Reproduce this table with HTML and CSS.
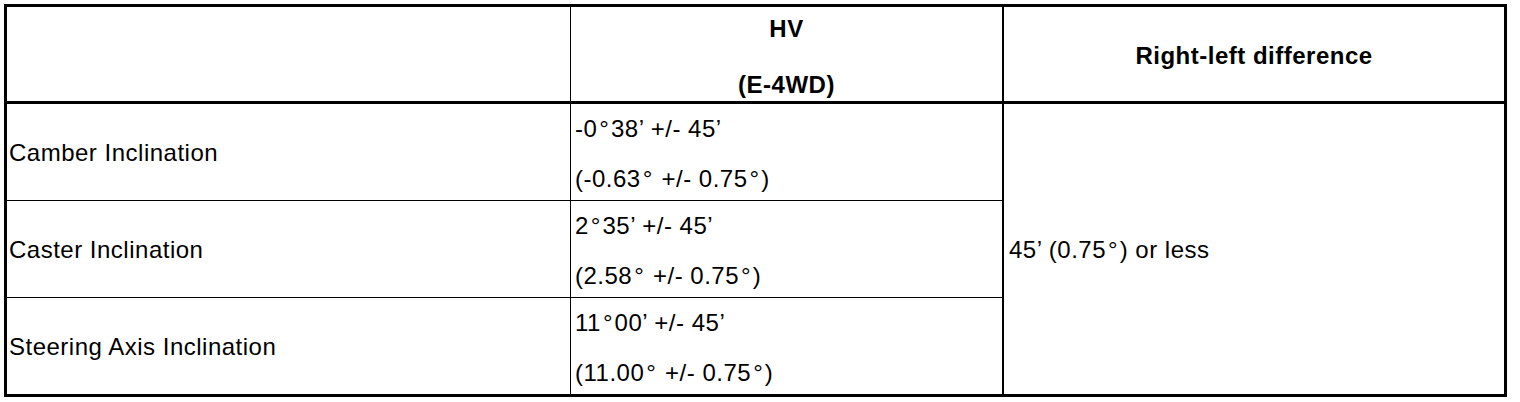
FILE: index.html
```html
<!DOCTYPE html>
<html>
<head>
<meta charset="utf-8">
<link rel="stylesheet" href="styles.css">
</head>
<body>
<div class="spec">
  <div class="cell head c1"></div>
  <div class="cell head c2 model">
    <div class="line">HV</div>
    <div class="line">(E-4WD)</div>
  </div>
  <div class="cell head c3 diff-head">Right-left difference</div>

  <div class="cell c1 label">Camber Inclination</div>
  <div class="cell c2 value">
    <div class="line">-0<span class="deg">°</span>38’ +/- 45’</div>
    <div class="line">(-0.63<span class="deg">°</span> +/- 0.75<span class="deg">°</span>)</div>
  </div>
  <div class="cell c3 diff">45’ (0.75<span class="deg">°</span>) or less</div>

  <div class="cell c1 label">Caster Inclination</div>
  <div class="cell c2 value">
    <div class="line">2<span class="deg">°</span>35’ +/- 45’</div>
    <div class="line">(2.58<span class="deg">°</span> +/- 0.75<span class="deg">°</span>)</div>
  </div>

  <div class="cell c1 label last">Steering Axis Inclination</div>
  <div class="cell c2 value last">
    <div class="line">11<span class="deg">°</span>00’ +/- 45’</div>
    <div class="line">(11.00<span class="deg">°</span> +/- 0.75<span class="deg">°</span>)</div>
  </div>
</div>
</body>
</html>
```

FILE: styles.css
```css
html, body {
  margin: 0;
  padding: 0;
  background: #fff;
}

body {
  padding: 4px;
  font-family: "Liberation Sans", Arial, sans-serif;
  font-size: 24px;
  color: #000;
}

.spec {
  width: 1503px;
  height: 393px;
  box-sizing: border-box;
  border: 3px solid #000;
  display: grid;
  grid-template-columns: 564px 433px 1fr;
  grid-template-rows: 97px 97px 97px 1fr;
}

.cell {
  box-sizing: border-box;
  line-height: 28px;
  letter-spacing: 0.5px;
}

.deg {
  margin-left: 2px;
  margin-right: 1.5px;
}

.c1 {
  border-right: 1px solid #000;
  border-bottom: 1px solid #000;
}

.c2 {
  border-right: 2px solid #000;
  border-bottom: 1px solid #000;
}

.head {
  border-bottom: 3px solid #000;
}

.last {
  border-bottom: none;
}

.model {
  font-weight: bold;
  text-align: center;
  padding-top: 8px;
  display: flex;
  flex-direction: column;
  gap: 28px;
}

.diff-head {
  font-weight: bold;
  display: flex;
  align-items: center;
  justify-content: center;
  padding-top: 3px;
}

.label {
  display: flex;
  align-items: center;
  padding-left: 2px;
  padding-top: 1px;
}

.value {
  display: flex;
  flex-direction: column;
  gap: 22px;
  padding-top: 11px;
  padding-left: 4px;
}

.diff {
  grid-column: 3;
  grid-row: 2 / span 3;
  display: flex;
  align-items: center;
  padding-left: 5px;
  padding-top: 1px;
}
```
